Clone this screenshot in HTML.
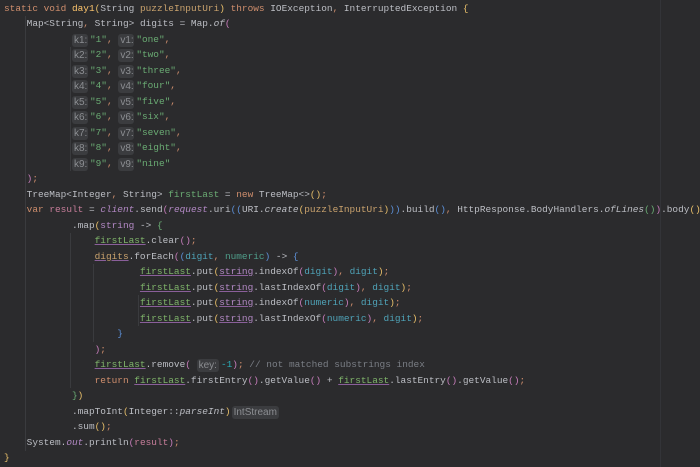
<!DOCTYPE html>
<html><head><meta charset="utf-8"><style>
html,body{margin:0;padding:0;background:#2b2b2d;width:700px;height:467px;overflow:hidden}
pre{margin:0;position:absolute;left:4px;top:0.5px;font-family:"Liberation Mono","DejaVu Sans Mono",monospace;font-size:9.45px;line-height:15.5px;color:#bcbec4;white-space:pre}
.k{color:#cf8e6d}.s{color:#6aab73}.m{color:#ffc66d}.p{color:#c9a26d}.f{color:#b389c5}.i{font-style:italic}
.g{color:#7fb46a;text-decoration:underline;text-decoration-color:#8a5f9a}
.d{color:#4fa3b8}.st{color:#b389c5}.su{text-decoration:underline;text-decoration-color:#8a5f9a}
.c{color:#7a7e85}.b1{color:#e8bf6a}.b2{color:#c77dbb}.b3{color:#5c8fd6}.b4{color:#6aab73}
.h{display:inline-block;background:#3b3c3f;color:#8c8e92;font-family:"Liberation Sans",sans-serif;font-size:10px;line-height:13px;border-radius:3px;padding:0 2px;margin-right:2px;vertical-align:-1px;box-sizing:border-box}
.h.w{width:16px}
.gd{position:absolute;width:1px;background:#3a3b3e}
</style></head><body>
<div class="gd" style="left:660px;top:0;height:467px;background:#333438"></div>
<div class="gd" style="left:25px;top:16px;height:435px"></div>
<div class="gd" style="left:70px;top:47px;height:124px"></div>
<div class="gd" style="left:70px;top:233px;height:155px"></div>
<div class="gd" style="left:93px;top:264px;height:78px"></div>
<div class="gd" style="left:138px;top:295px;height:31px"></div>
<pre><span class="k">static void</span> <span class="m">day1</span><span class="b1">(</span>String <span class="p">puzzleInputUri</span><span class="b1">)</span> <span class="k">throws</span> IOException<span class="k">,</span> InterruptedException <span class="b1">{</span>
    Map&lt;String<span class="k">,</span> String&gt; digits = Map.<span class="i">of</span><span class="b2">(</span>
            <span class="h w">k1:</span><span class="s">"1"</span><span class="k">,</span> <span class="h w">v1:</span><span class="s">"one"</span><span class="k">,</span>
            <span class="h w">k2:</span><span class="s">"2"</span><span class="k">,</span> <span class="h w">v2:</span><span class="s">"two"</span><span class="k">,</span>
            <span class="h w">k3:</span><span class="s">"3"</span><span class="k">,</span> <span class="h w">v3:</span><span class="s">"three"</span><span class="k">,</span>
            <span class="h w">k4:</span><span class="s">"4"</span><span class="k">,</span> <span class="h w">v4:</span><span class="s">"four"</span><span class="k">,</span>
            <span class="h w">k5:</span><span class="s">"5"</span><span class="k">,</span> <span class="h w">v5:</span><span class="s">"five"</span><span class="k">,</span>
            <span class="h w">k6:</span><span class="s">"6"</span><span class="k">,</span> <span class="h w">v6:</span><span class="s">"six"</span><span class="k">,</span>
            <span class="h w">k7:</span><span class="s">"7"</span><span class="k">,</span> <span class="h w">v7:</span><span class="s">"seven"</span><span class="k">,</span>
            <span class="h w">k8:</span><span class="s">"8"</span><span class="k">,</span> <span class="h w">v8:</span><span class="s">"eight"</span><span class="k">,</span>
            <span class="h w">k9:</span><span class="s">"9"</span><span class="k">,</span> <span class="h w">v9:</span><span class="s">"nine"</span>
    <span class="b2">)</span><span class="k">;</span>
    TreeMap&lt;Integer<span class="k">,</span> String&gt; <span class="s">firstLast</span> = <span class="k">new</span> TreeMap&lt;&gt;<span class="b1">()</span><span class="k">;</span>
    <span class="k">var</span> <span class="f" style="color:#c77d9a">result</span> = <span class="f i">client</span>.send<span class="b2">(</span><span class="f i">request</span>.uri<span class="b3">((</span>URI.<span class="i">create</span><span class="b1">(</span><span class="p">puzzleInputUri</span><span class="b1">)</span><span class="b3">))</span>.build<span class="b3">()</span><span class="k">,</span> HttpResponse.BodyHandlers.<span class="i">ofLines</span><span class="b4">()</span><span class="b2">)</span>.body<span class="b1">()</span>
            .map<span class="b1">(</span><span class="st">string</span> -&gt; <span class="b4">{</span>
                <span class="g">firstLast</span>.clear<span class="b2">()</span><span class="k">;</span>
                <span class="su" style="color:#c9a26d">digits</span>.forEach<span class="b2">(</span><span class="b3">(</span><span class="d">digit</span><span class="k">,</span> <span class="d" style="color:#4f9e8a">numeric</span><span class="b3">)</span> -&gt; <span class="b3">{</span>
                        <span class="g">firstLast</span>.put<span class="b1">(</span><span class="st su">string</span>.indexOf<span class="b2">(</span><span class="d">digit</span><span class="b2">)</span><span class="k">,</span> <span class="d">digit</span><span class="b1">)</span><span class="k">;</span>
                        <span class="g">firstLast</span>.put<span class="b1">(</span><span class="st su">string</span>.lastIndexOf<span class="b2">(</span><span class="d">digit</span><span class="b2">)</span><span class="k">,</span> <span class="d">digit</span><span class="b1">)</span><span class="k">;</span>
                        <span class="g">firstLast</span>.put<span class="b1">(</span><span class="st su">string</span>.indexOf<span class="b2">(</span><span class="d">numeric</span><span class="b2">)</span><span class="k">,</span> <span class="d">digit</span><span class="b1">)</span><span class="k">;</span>
                        <span class="g">firstLast</span>.put<span class="b1">(</span><span class="st su">string</span>.lastIndexOf<span class="b2">(</span><span class="d">numeric</span><span class="b2">)</span><span class="k">,</span> <span class="d">digit</span><span class="b1">)</span><span class="k">;</span>
                    <span class="b3">}</span>
                <span class="b2">)</span><span class="k">;</span>
                <span class="g">firstLast</span>.remove<span class="b2">(</span> <span class="h">key:</span><span style="color:#2aacb8">-1</span><span class="b2">)</span><span class="k">;</span> <span class="c">// not matched substrings index</span>
                <span class="k">return</span> <span class="g">firstLast</span>.firstEntry<span class="b2">()</span>.getValue<span class="b2">()</span> + <span class="g">firstLast</span>.lastEntry<span class="b2">()</span>.getValue<span class="b2">()</span><span class="k">;</span>
            <span class="b4">}</span><span class="b1">)</span>
            .mapToInt<span class="b1">(</span>Integer::<span class="i">parseInt</span><span class="b1">)</span><span class="h" style="margin-left:1px">IntStream</span>
            .sum<span class="b1">()</span><span class="k">;</span>
    System.<span class="f i">out</span>.println<span class="b2">(</span><span style="color:#c77d9a">result</span><span class="b2">)</span><span class="k">;</span>
<span class="b1">}</span></pre>
</body></html>
